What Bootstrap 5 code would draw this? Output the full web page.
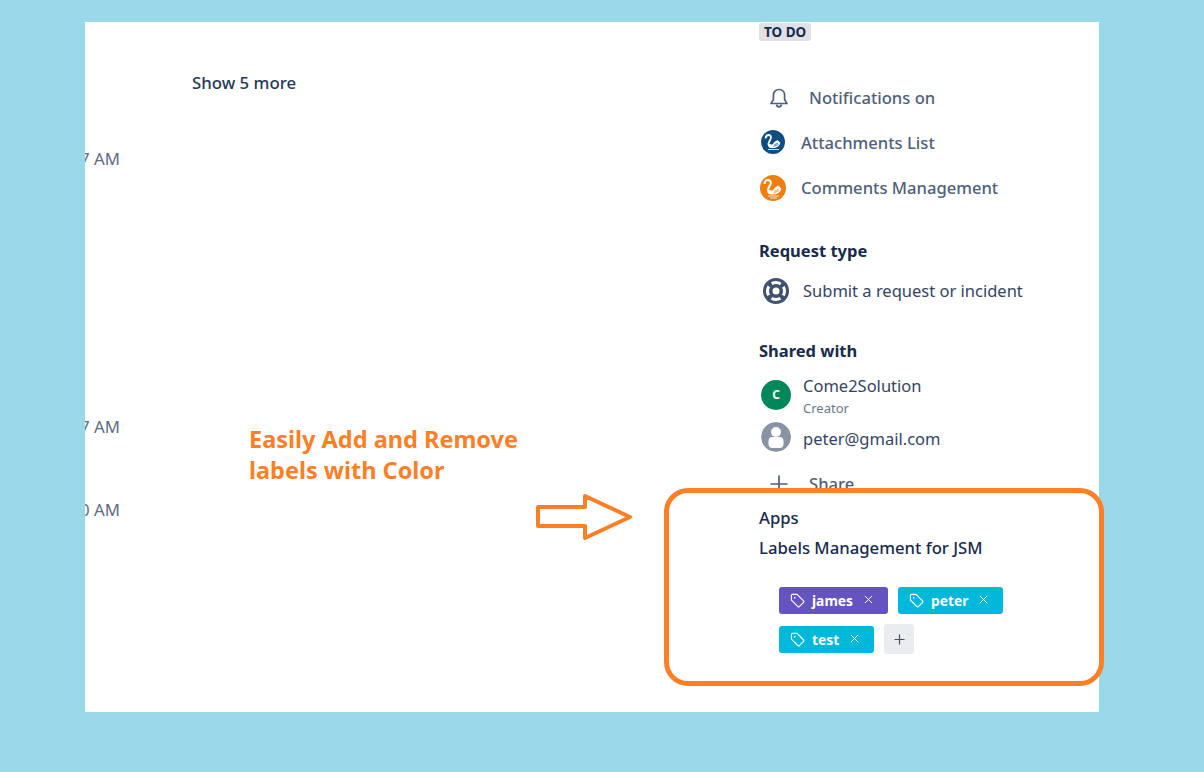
<!DOCTYPE html>
<html lang="en">
<head>
<meta charset="utf-8">
<title>Labels Management for JSM</title>
<link href="https://cdn.jsdelivr.net/npm/bootstrap@5.3.0/dist/css/bootstrap.min.css" rel="stylesheet">
<style>
html,body{height:100%;}
body{background:#99d9ea;font-family:"Noto Sans",sans-serif;overflow:hidden;padding:22px 0 0 85px;}
.stage{position:relative;width:1014px;height:690px;}
.sheet{width:1014px;height:690px;background:#fff;overflow:hidden;}
.left-col{width:674px;flex:none;}
.more{margin:49px 0 0 107px;font-size:16.8px;font-weight:500;line-height:24px;color:#253858;}
.stamp{width:35px;font-size:16.8px;line-height:24px;color:#5e6c84;white-space:nowrap;overflow:hidden;}
.stamp-a{margin-top:52px;}
.stamp-b{margin-top:244px;}
.stamp-c{margin-top:59px;}
.right-col{width:340px;flex:none;color:#172b4d;}
.status{display:inline-block;background:#dfe1e6;color:#172b4d;font-size:13.5px;font-weight:700;line-height:18px;padding:0 5px;border-radius:3px;height:18px;vertical-align:top;margin-top:1px;}
.status-row{height:19px;}
.row-text{font-size:16.6px;font-weight:500;line-height:24px;color:#505f79;white-space:nowrap;}
.line{height:45px;}
.ico-bell{width:22px;margin-left:9px;margin-right:19px;}
.ico-app{width:26px;margin-left:1px;margin-right:15px;}
.first-line{margin-top:34px;}
.section{font-size:16.5px;font-weight:700;line-height:24px;color:#172b4d;}
.sec-req{margin-top:29px;}
.sub-line{margin-top:12px;height:32px;}
.ico-ring{width:28px;margin-left:3px;margin-right:13px;}
.dark-text{font-size:16.5px;line-height:24px;color:#344563;white-space:nowrap;}
.sec-share{margin-top:32px;}
.person{margin-left:2px;}
.disc{width:30px;height:30px;border-radius:50%;flex:none;margin-right:12px;}
.disc-c{background:#00875a;color:#fff;font-size:12px;font-weight:700;}
.who{margin-top:8px;height:48px;}
.who-name{line-height:24px;}
.who-role{font-size:13px;line-height:18px;color:#6b778c;margin-top:1px;}
.who2{height:32px;margin-top:4px;}
.disc-up{margin-bottom:4px;}
.share-line{margin-top:17px;height:24px;}
.apps-label{font-size:16.7px;font-weight:500;line-height:24px;color:#172b4d;margin-top:10px;}
.apps-name{font-size:16.7px;font-weight:500;line-height:24px;color:#172b4d;margin-top:6px;}
.chips{margin:27px 0 0 20px;width:240px;column-gap:10px;row-gap:12px;}
.chip{height:27px;border-radius:3px;color:#fff;font-size:13.8px;font-weight:700;padding:0 15px 0 11px;}
.chip-x{margin-left:11px;margin-bottom:2px;}
.chip-t{margin-left:7px;padding-top:2px;}
.chip-purple{background:#6554c0;}
.chip-cyan{background:#00b8d9;}
.chip-add{width:30px;height:30px;border-radius:3px;background:#ebecf0;margin-top:-2px;}
.note{position:absolute;left:164px;top:402px;font-size:23.5px;font-weight:700;line-height:31px;color:#ff7f27;white-space:nowrap;}
.frame{position:absolute;left:579px;top:466px;width:440px;height:198px;border:5px solid #ff7f27;border-radius:24px;pointer-events:none;}
.arrow{position:absolute;left:449px;top:470px;}
</style>
</head>
<body>
<div class="stage">
  <div class="sheet d-flex">
    <div class="left-col">
      <div class="more">Show 5 more</div>
      <div class="stamp stamp-a d-flex justify-content-end">10:07 AM</div>
      <div class="stamp stamp-b d-flex justify-content-end">10:07 AM</div>
      <div class="stamp stamp-c d-flex justify-content-end">10:10 AM</div>
    </div>
    <div class="right-col">
      <div class="status-row"><span class="status">TO DO</span></div>
      <div class="first-line line d-flex align-items-center">
        <svg class="ico-bell" viewBox="0 0 22 22" height="22" fill="none" stroke="#505f79" stroke-width="1.700" stroke-linejoin="round"><path d="M11 2.500c-3.400 0-5.600 2.500-5.600 5.800v4.300L3 16.500h16l-2.400-3.900V8.300c0-3.300-2.200-5.800-5.600-5.800z"/><path d="M8.500 17.500c.3 1.500 1.200 2.300 2.500 2.300s2.200-.8 2.500-2.300"/></svg>
        <span class="row-text">Notifications on</span>
      </div>
      <div class="line d-flex align-items-center">
        <svg class="ico-app" viewBox="0 0 26 26" height="26"><circle cx="13" cy="12" r="12" fill="#0f4c81"/><path d="M5.500 8.500c.3-2.300 1.500-3.500 3-3.500 2 0 3 1.700 2.300 3.500-.7 1.800-2 3-2 5" fill="none" stroke="#fff" stroke-width="1.800"/><path d="M7.500 13c1.300 0 2.200 1.500 4 1.500 1 0 1.500-.5 2-1.500 1-1.500 2.800-2 4-3 .2 1 .9 1 1.500 1-.1 1 .5 1.300 1.300 1.500-.3 3-3.300 5.500-6.800 5.500H11C9 18 7.500 16.500 7.500 13z" fill="#fff"/><path d="M14 15l4-2M13.500 16.500l5-2" stroke="#0f4c81" stroke-width=".7"/><path d="M8 19.500h11" stroke="#fff" stroke-width=".8"/></svg>
        <span class="row-text">Attachments List</span>
      </div>
      <div class="line d-flex align-items-center">
        <svg class="ico-app" viewBox="0 0 26 26" height="26"><circle cx="13" cy="13" r="13" fill="#ee7f0e"/><path d="M4.500 9c.3-2.600 1.700-4 3.500-4 2.200 0 3.300 1.900 2.600 4-.8 2-2.300 3.400-2.300 5.500" fill="none" stroke="#fff" stroke-width="2.100"/><path d="M7 14c1.500 0 2.500 1.600 4.500 1.600 1.100 0 1.700-.5 2.200-1.600 1.100-1.700 3.100-2.300 4.500-3.500.2 1.100 1 1.100 1.700 1.100-.1 1.200.6 1.500 1.400 1.700-.3 3.400-3.700 6.200-7.600 6.200H11C8.700 19.500 7 17.800 7 14z" fill="#fff"/><path d="M14 16.500l4.500-2.300M13.500 18l5.500-2.300" stroke="#ee7f0e" stroke-width=".7"/><path d="M8 21h11M10 23h7" stroke="#fff" stroke-width=".8"/></svg>
        <span class="row-text">Comments Management</span>
      </div>
      <div class="section sec-req">Request type</div>
      <div class="sub-line d-flex align-items-center">
        <svg class="ico-ring" viewBox="0 0 28 28" height="28"><circle cx="14" cy="14" r="13" fill="#42526e"/><circle cx="14" cy="14" r="8.500" fill="none" stroke="#fff" stroke-width="3" stroke-dasharray="9.350 4" stroke-dashoffset="4.670"/><circle cx="14" cy="14" r="3.500" fill="#fff"/></svg>
        <span class="dark-text">Submit a request or incident</span>
      </div>
      <div class="section sec-share">Shared with</div>
      <div class="who person d-flex align-items-center">
        <div class="disc disc-c d-flex align-items-center justify-content-center">C</div>
        <div>
          <div class="dark-text who-name">Come2Solution</div>
          <div class="who-role">Creator</div>
        </div>
      </div>
      <div class="who2 person d-flex align-items-center">
        <svg class="disc disc-up" viewBox="0 0 30 30" width="30" height="30"><circle cx="15" cy="15" r="15" fill="#8993a4"/><circle cx="15" cy="10" r="5" fill="#fff"/><rect x="7.500" y="15" width="15" height="11" rx="4" fill="#fff"/></svg>
        <span class="dark-text">peter@gmail.com</span>
      </div>
      <div class="share-line d-flex align-items-center">
        <svg class="ico-bell" viewBox="0 0 22 22" height="22" stroke="#505f79" stroke-width="1.700"><path d="M11 2.500v17M2.500 11h17"/></svg>
        <span class="row-text">Share</span>
      </div>
      <div class="apps-label">Apps</div>
      <div class="apps-name">Labels Management for JSM</div>
      <div class="chips d-flex flex-wrap">
        <div class="chip chip-purple d-flex align-items-center">
          <svg viewBox="0 0 16 16" width="15" height="15" fill="none" stroke="#fff" stroke-width="1.200" stroke-linejoin="round"><path d="M1.500 2.500a1 1 0 0 1 1-1h5l7 7a1 1 0 0 1 0 1.400l-4.600 4.600a1 1 0 0 1-1.400 0l-7-7z"/><circle cx="5" cy="5" r=".9" fill="#fff" stroke="none"/></svg>
          <span class="chip-t">james</span>
          <svg class="chip-x" viewBox="0 0 10 10" width="9" height="9" stroke="#fff" stroke-width="1.100"><path d="M1 1l8 8M9 1l-8 8"/></svg>
        </div>
        <div class="chip chip-cyan d-flex align-items-center">
          <svg viewBox="0 0 16 16" width="15" height="15" fill="none" stroke="#fff" stroke-width="1.200" stroke-linejoin="round"><path d="M1.500 2.500a1 1 0 0 1 1-1h5l7 7a1 1 0 0 1 0 1.400l-4.600 4.600a1 1 0 0 1-1.400 0l-7-7z"/><circle cx="5" cy="5" r=".9" fill="#fff" stroke="none"/></svg>
          <span class="chip-t">peter</span>
          <svg class="chip-x" viewBox="0 0 10 10" width="9" height="9" stroke="#fff" stroke-width="1.100"><path d="M1 1l8 8M9 1l-8 8"/></svg>
        </div>
        <div class="chip chip-cyan d-flex align-items-center">
          <svg viewBox="0 0 16 16" width="15" height="15" fill="none" stroke="#fff" stroke-width="1.200" stroke-linejoin="round"><path d="M1.500 2.500a1 1 0 0 1 1-1h5l7 7a1 1 0 0 1 0 1.400l-4.600 4.600a1 1 0 0 1-1.400 0l-7-7z"/><circle cx="5" cy="5" r=".9" fill="#fff" stroke="none"/></svg>
          <span class="chip-t">test</span>
          <svg class="chip-x" viewBox="0 0 10 10" width="9" height="9" stroke="#fff" stroke-width="1.100"><path d="M1 1l8 8M9 1l-8 8"/></svg>
        </div>
        <div class="chip-add d-flex align-items-center justify-content-center">
          <svg viewBox="0 0 12 12" width="11" height="11" stroke="#42526e" stroke-width="1.300"><path d="M6 .5v11M.5 6h11"/></svg>
        </div>
      </div>
    </div>
  </div>
  <div class="note">Easily Add and Remove<br>labels with Color</div>
  <svg class="arrow" width="100" height="50" viewBox="0 0 100 50" fill="none" stroke="#ff7f27" stroke-width="4" stroke-linejoin="round"><path d="M4 15H51V4L96 25 51 46V34H4z"/></svg>
  <div class="frame"></div>
</div>
<script src="https://cdn.jsdelivr.net/npm/bootstrap@5.3.0/dist/js/bootstrap.bundle.min.js"></script>
</body>
</html>
